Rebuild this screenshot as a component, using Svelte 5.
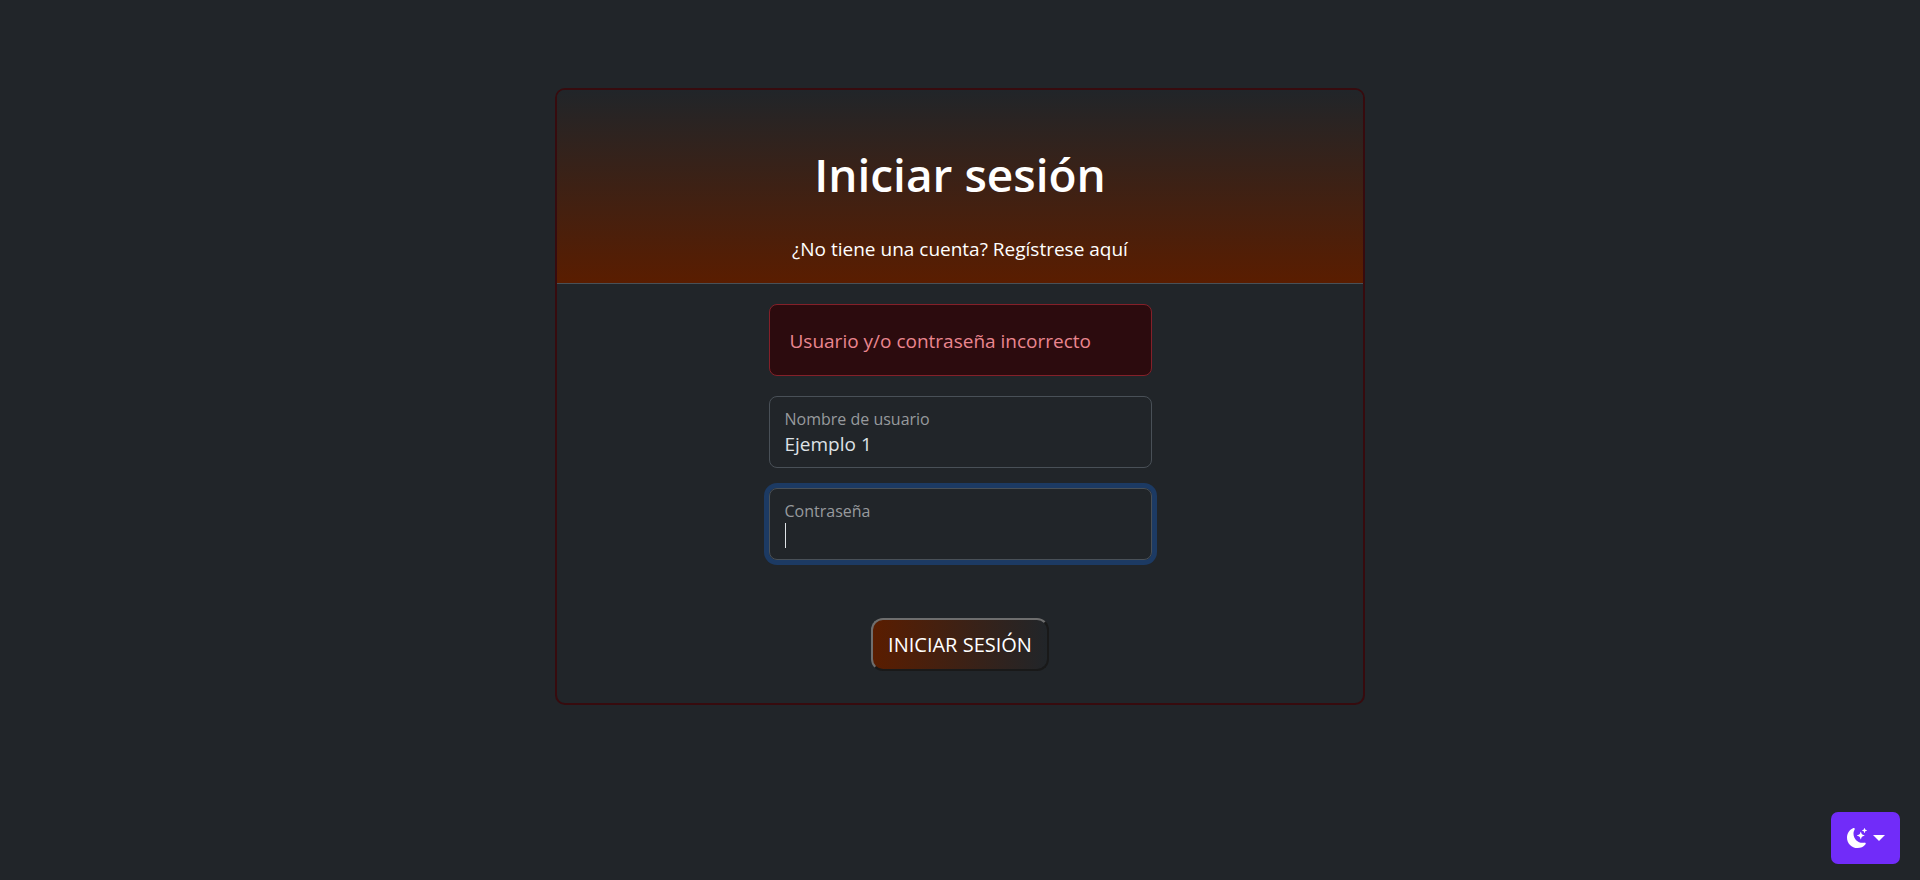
<script>
  let username = $state('Ejemplo 1');
  let password = $state('');
</script>

<main>
  <section class="card">
    <header>
      <h1>Iniciar sesión</h1>
      <a href="#registro">¿No tiene una cuenta? Regístrese aquí</a>
    </header>
    <form onsubmit={(e) => e.preventDefault()}>
      <div class="alert" role="alert">Usuario y/o contraseña incorrecto</div>
      <div class="field">
        <label for="username">Nombre de usuario</label>
        <input id="username" type="text" bind:value={username} />
      </div>
      <div class="field active">
        <label for="password">Contraseña</label>
        <input id="password" type="password" bind:value={password} />
        <span class="caret" aria-hidden="true"></span>
      </div>
      <button class="submit" type="submit">INICIAR SESIÓN</button>
    </form>
  </section>
</main>

<button class="theme" type="button" aria-label="Tema">
  <svg viewBox="0 0 16 16" width="20" height="20" fill="currentColor" aria-hidden="true">
    <path d="M6 .278a.77.77 0 0 1 .08.858 7.2 7.2 0 0 0-.878 3.46c0 4.021 3.278 7.277 7.318 7.277q.792-.001 1.533-.16a.79.79 0 0 1 .81.316.73.73 0 0 1-.031.893A8.35 8.35 0 0 1 8.344 16C3.734 16 0 12.286 0 7.71 0 4.266 2.114 1.312 5.124.06A.75.75 0 0 1 6 .278" />
    <path d="M10.794 3.148a.217.217 0 0 1 .412 0l.387 1.162c.173.518.579.924 1.097 1.097l1.162.387a.217.217 0 0 1 0 .412l-1.162.387a1.73 1.73 0 0 0-1.097 1.097l-.387 1.162a.217.217 0 0 1-.412 0l-.387-1.162A1.73 1.73 0 0 0 9.31 6.593l-1.162-.387a.217.217 0 0 1 0-.412l1.162-.387a1.73 1.73 0 0 0 1.097-1.097zM13.863.099a.145.145 0 0 1 .274 0l.258.774c.115.346.386.617.732.732l.774.258a.145.145 0 0 1 0 .274l-.774.258a1.16 1.16 0 0 0-.732.732l-.258.774a.145.145 0 0 1-.274 0l-.258-.774a1.16 1.16 0 0 0-.732-.732l-.774-.258a.145.145 0 0 1 0-.274l.774-.258c.346-.115.617-.386.732-.732z" />
  </svg>
  <span class="arrow"></span>
</button>

<style>
  :global(body) {
    background: #212529;
    color: #dee2e6;
    font-family: 'Segoe UI', 'Open Sans', 'Noto Sans', sans-serif;
    font-size: 19px;
    line-height: 30px;
  }

  main {
    padding: 88px 20px;
  }

  .card {
    box-sizing: border-box;
    max-width: 810px;
    margin: 0 auto;
    border: 2px solid #370b0e;
    border-radius: 10px;
    overflow: hidden;
  }

  header {
    display: flex;
    flex-direction: column;
    align-items: center;
    gap: 30px;
    padding: 54px 20px 19px;
    border-bottom: 1px solid #495057;
    background: linear-gradient(#212529, #5a1d00);
    text-align: center;
  }

  h1 {
    margin: 0;
    color: #fff;
    font-size: 46px;
    font-weight: 600;
    line-height: 60px;
  }

  header a {
    color: #fff;
    text-decoration: none;
  }

  form {
    display: flex;
    flex-direction: column;
    align-items: center;
    gap: 20px;
    padding: 20px 20px 32px;
  }

  .alert,
  .field {
    box-sizing: border-box;
    width: 100%;
    max-width: 383px;
    border: 1px solid #495057;
    border-radius: 8px;
  }

  .alert {
    padding: 21px 20px 19px;
    border-color: #842029;
    background: #2c0b0e;
    color: #ea868f;
  }

  .field {
    position: relative;
    padding: 10px 15px;
  }

  .field label {
    display: block;
    color: #979a9d;
    font-size: 16px;
    line-height: 25px;
  }

  .field input {
    display: block;
    width: 100%;
    box-sizing: border-box;
    height: 25px;
    padding: 0;
    border: 0;
    outline: 0;
    background: transparent;
    color: #dee2e6;
    font: inherit;
    line-height: 25px;
  }

  .active {
    box-shadow: 0 0 0 5px #1c3a63;
  }

  .caret {
    position: absolute;
    left: 15px;
    bottom: 11px;
    width: 1px;
    height: 25px;
    background: #dee2e6;
  }

  .submit {
    margin-top: 38px;
    padding: 10px 15px;
    border: 2px solid;
    border-color: #6e6e6e #191919 #191919 #6e6e6e;
    border-radius: 12px;
    background: linear-gradient(to right, #5a1d00, #212529);
    color: #fff;
    font: inherit;
    font-size: 20px;
    line-height: 29px;
  }

  .theme {
    position: fixed;
    right: 20px;
    bottom: 16px;
    display: flex;
    align-items: center;
    gap: 6px;
    height: 52px;
    padding: 0 15px 0 16px;
    border: 0;
    border-radius: 7px;
    background: #712cf9;
    color: #fff;
  }

  .arrow {
    border-top: 6px solid currentColor;
    border-right: 6px solid transparent;
    border-left: 6px solid transparent;
  }
</style>
